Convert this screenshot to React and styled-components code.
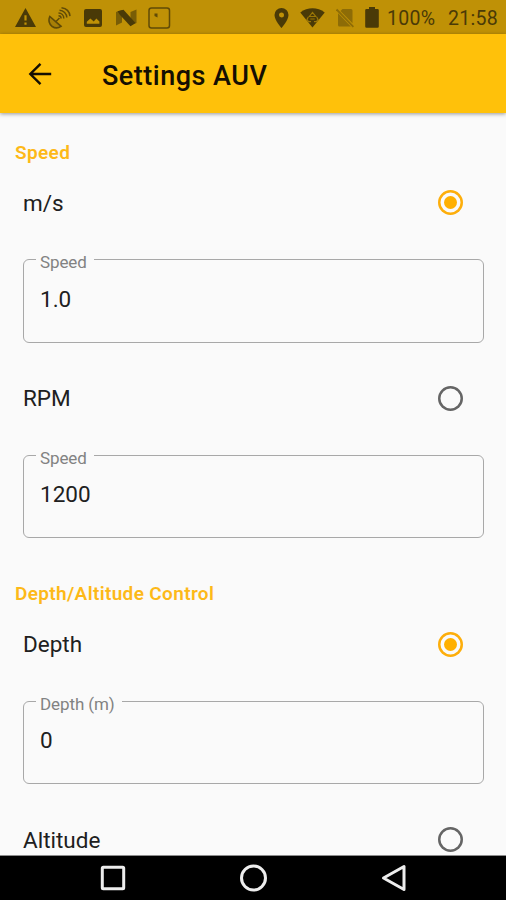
import React, { useState } from 'react'
import styled, { createGlobalStyle } from 'styled-components'

const StatusIcons = () => (
  <Notifications>
    <svg width="21" height="20" viewBox="0 0 21 20">
      <path fill="currentColor" fillRule="evenodd" d="M10.5 0 21 19H0ZM9.4 7.2v5.4h2.2V7.2ZM9.4 14.6v2.2h2.2v-2.2Z" />
    </svg>
    <svg width="25" height="22" viewBox="0 0 25 22" fill="none" stroke="currentColor" opacity=".8">
      <path strokeWidth="1.6" fill="currentColor" fillOpacity=".25" d="M1.800 9.500c-1.800 3.800-.4 8 2.400 10 2.700 1.800 6 1.800 8.800-.2Z" />
      <path strokeWidth="1.5" d="m8 14.500 3.500-3.500M10.500 8.800c1.500 0 2.600 1.100 2.600 2.600M10.500 6.100c3 0 5.300 2.300 5.300 5.300M11.500 3.300c4 .2 7.200 3.200 7.300 7.200M13.500.8c4.600.6 8 3.800 8.500 8.400" />
    </svg>
    <svg width="18" height="18" viewBox="0 0 18 18">
      <path fill="currentColor" fillRule="evenodd" d="M2 0h14a2 2 0 0 1 2 2v14a2 2 0 0 1-2 2H2a2 2 0 0 1-2-2V2a2 2 0 0 1 2-2Zm.8 14.800h12.600v-2.200l-3-3-2.700 2.800-3.300-3-3.600 3.400Z" />
    </svg>
    <svg width="23" height="18" viewBox="-2 0 23 18" fill="currentColor">
      <path opacity=".6" d="m0 3 6-2v12.500l-6 3ZM14.500 3 20.500.500V14l-6 2.500Z" />
      <path d="M1.500 2.200 7.500.8 19.500 14l-5 3.200L4 6Z" />
    </svg>
    <svg width="23" height="22" viewBox="0 0 23 22" opacity=".8">
      <rect x="1" y="1" width="20.500" height="20" rx="2.500" fill="none" stroke="currentColor" strokeWidth="1.500" />
      <path fill="currentColor" d="M6.500 6.500h3v4l-3-1.500Z" />
    </svg>
  </Notifications>
)

const SystemIcons = () => (
  <System>
    <svg width="15" height="20" viewBox="0 0 15 20">
      <path fill="currentColor" fillRule="evenodd" d="M7.500 0A7 7 0 0 0 .5 7c0 5.200 7 13 7 13s7-7.800 7-13a7 7 0 0 0-7-7Zm0 4.500a2.500 2.500 0 1 1 0 5 2.500 2.500 0 0 1 0-5Z" />
    </svg>
    <svg width="25" height="20" viewBox="0 0 25 20">
      <path fill="currentColor" d="M.3 4.500C7.500-1.100 17.500-1.100 24.700 4.500L12.500 19.500Z" />
      <g fill="none" stroke="#bf9106" strokeWidth="1.200" opacity=".7">
        <path d="m9.300 8.500 3.200-4 3.200 4ZM8.300 9 7 11.500l1.500 2.200h2.500M16.700 9l1.300 2.500-1.500 2.200H14M10.300 11h4.400" />
      </g>
    </svg>
    <svg width="18" height="20" viewBox="0 0 18 20" opacity=".42">
      <path fill="currentColor" d="M6.500 1H15a1.500 1.500 0 0 1 1.500 1.500v12.700L4.500 3ZM2 5.200l12.800 13.300H3.500A1.500 1.500 0 0 1 2 17Z" />
      <path stroke="currentColor" strokeWidth="1.800" d="m.6 1.500 16.800 17.300" />
    </svg>
    <svg width="14" height="21" viewBox="0 0 14 21">
      <path fill="currentColor" d="M4 0h6v2h2.500A1.300 1.300 0 0 1 13.800 3.300v16.200a1.300 1.300 0 0 1-1.300 1.300h-11A1.300 1.300 0 0 1 .2 19.500V3.300A1.300 1.300 0 0 1 1.500 2H4Z" />
    </svg>
    <Battery>100%</Battery>
    <Clock>21:58</Clock>
  </System>
)

const Option = ({ label, checked, onSelect }) => (
  <OptionRow onClick={onSelect}>
    <OptionLabel>{label}</OptionLabel>
    <Radio role="radio" aria-checked={checked} $checked={checked} />
  </OptionRow>
)

const Field = ({ label, legendWidth, value }) => (
  <Outline>
    <Legend $width={legendWidth}>{label}</Legend>
    <Value>{value}</Value>
  </Outline>
)

const App = () => {
  const [speedMode, setSpeedMode] = useState('ms')
  const [depthMode, setDepthMode] = useState('depth')

  return (
    <>
      <GlobalStyle />
      <Screen>
        <StatusBar>
          <StatusIcons />
          <SystemIcons />
        </StatusBar>
        <AppBar>
          <svg width="24" height="24" viewBox="0 0 24 24" fill="none" stroke="currentColor" strokeWidth="2.400">
            <path d="M23.200 12H2.200M12.500 1.800 2.300 12l10.200 10.200" />
          </svg>
          <Title>Settings AUV</Title>
        </AppBar>
        <Content>
          <SectionTitle>Speed</SectionTitle>
          <Option label="m/s" checked={speedMode === 'ms'} onSelect={() => setSpeedMode('ms')} />
          <Field label="Speed" legendWidth={58} value="1.0" />
          <Option label="RPM" checked={speedMode === 'rpm'} onSelect={() => setSpeedMode('rpm')} />
          <Field label="Speed" legendWidth={58} value="1200" />
          <SectionTitle $spaced>Depth/Altitude Control</SectionTitle>
          <Option label="Depth" checked={depthMode === 'depth'} onSelect={() => setDepthMode('depth')} />
          <Field label="Depth (m)" legendWidth={86} value="0" />
          <Option label="Altitude" checked={depthMode === 'altitude'} onSelect={() => setDepthMode('altitude')} />
        </Content>
        <NavBar>
          <svg width="26" height="26" viewBox="0 0 26 26">
            <rect x="2.300" y="2.300" width="21.400" height="21.400" rx="1" />
          </svg>
          <svg width="28" height="28" viewBox="0 0 28 28">
            <circle cx="13.500" cy="14" r="12" />
          </svg>
          <svg width="26" height="28" viewBox="0 0 26 28">
            <path strokeLinejoin="round" d="M23 2.500v23L2.500 14Z" />
          </svg>
        </NavBar>
      </Screen>
    </>
  )
}

export default App

const GlobalStyle = createGlobalStyle`
  * {
    box-sizing: border-box;
  }

  body {
    margin: 0;
    font-family: Roboto, 'Liberation Sans', sans-serif;
  }

  svg {
    display: block;
    flex: none;
  }
`

const Screen = styled.div`
  display: flex;
  flex-direction: column;
  width: 506px;
  height: 900px;
  overflow: hidden;
  background-color: #fafafa;
`

const StatusBar = styled.div`
  display: flex;
  flex: none;
  align-items: center;
  justify-content: space-between;
  height: 34px;
  padding: 1px 8px 0 15px;
  background-color: #bf9106;
  color: #4a3a07;
`

const Notifications = styled.div`
  display: flex;
  align-items: center;
  gap: 11.500px;
`

const System = styled.div`
  display: flex;
  align-items: center;
  gap: 11px;
`

const Battery = styled.div`
  width: 50px;
  margin-left: -3px;
  padding-top: 2px;
  font-size: 19.500px;
  letter-spacing: 0.300px;
`

const Clock = styled.div`
  padding-top: 2px;
  font-size: 19.500px;
  letter-spacing: 0.300px;
`

const AppBar = styled.div`
  display: flex;
  flex: none;
  align-items: center;
  gap: 50px;
  height: 79px;
  padding-left: 28px;
  background-color: #ffc10a;
  box-shadow: 0 1px 4px rgba(0, 0, 0, 0.4);
  color: #150f02;
  z-index: 1;
`

const Title = styled.div`
  padding-top: 4px;
  font-size: 27px;
  font-weight: 500;
  letter-spacing: 0.500px;
`

const Content = styled.div`
  flex: 1;
  min-height: 0;
  padding-top: 22.500px;
  overflow: hidden;
`

const SectionTitle = styled.div`
  height: 33.500px;
  margin-top: ${props => props.$spaced ? '39px' : 0};
  padding: 0.200px 0 0 15px;
  color: #fdb918;
  font-size: 19px;
  font-weight: 600;
  letter-spacing: 0.350px;
  line-height: 33.500px;
`

const OptionRow = styled.div`
  display: flex;
  align-items: center;
  justify-content: space-between;
  height: 67.500px;
  padding: 0 43px 0 23px;
  cursor: pointer;
`

const OptionLabel = styled.div`
  color: #202020;
  font-size: 22.500px;
  letter-spacing: 0;
`

const Radio = styled.div`
  display: flex;
  align-items: center;
  justify-content: center;
  width: 25px;
  height: 25px;
  border-radius: 50%;
  box-shadow: inset 0 0 0 2.500px ${props => props.$checked ? '#fdae0b' : '#656565'};

  &::after {
    content: '';
    width: 13px;
    height: 13px;
    border-radius: 50%;
    background-color: ${props => props.$checked ? '#ffb000' : 'transparent'};
  }
`

const Outline = styled.fieldset`
  height: 95px;
  margin: 11px 22px 22px 23px;
  padding: 0 0 0 12px;
  border: 1.500px solid #a8a8a8;
  border-radius: 6px;
`

const Legend = styled.legend`
  width: ${props => props.$width}px;
  height: 24px;
  padding: 4.500px 0 0 4px;
  color: #828282;
  font-size: 17px;
  letter-spacing: -0.100px;
  line-height: 20px;
  white-space: nowrap;
`

const Value = styled.div`
  padding: 14px 0 0 4px;
  color: #202020;
  font-size: 22.500px;
  letter-spacing: 0;
  line-height: 26px;
`

const NavBar = styled.div`
  display: flex;
  flex: none;
  align-items: center;
  justify-content: space-between;
  height: 45px;
  padding: 0 99px 0 100px;
  border-top: 1px solid #8c8c8c;
  background-color: #000;

  svg {
    fill: none;
    stroke: #ededed;
    stroke-width: 3;
  }
`
